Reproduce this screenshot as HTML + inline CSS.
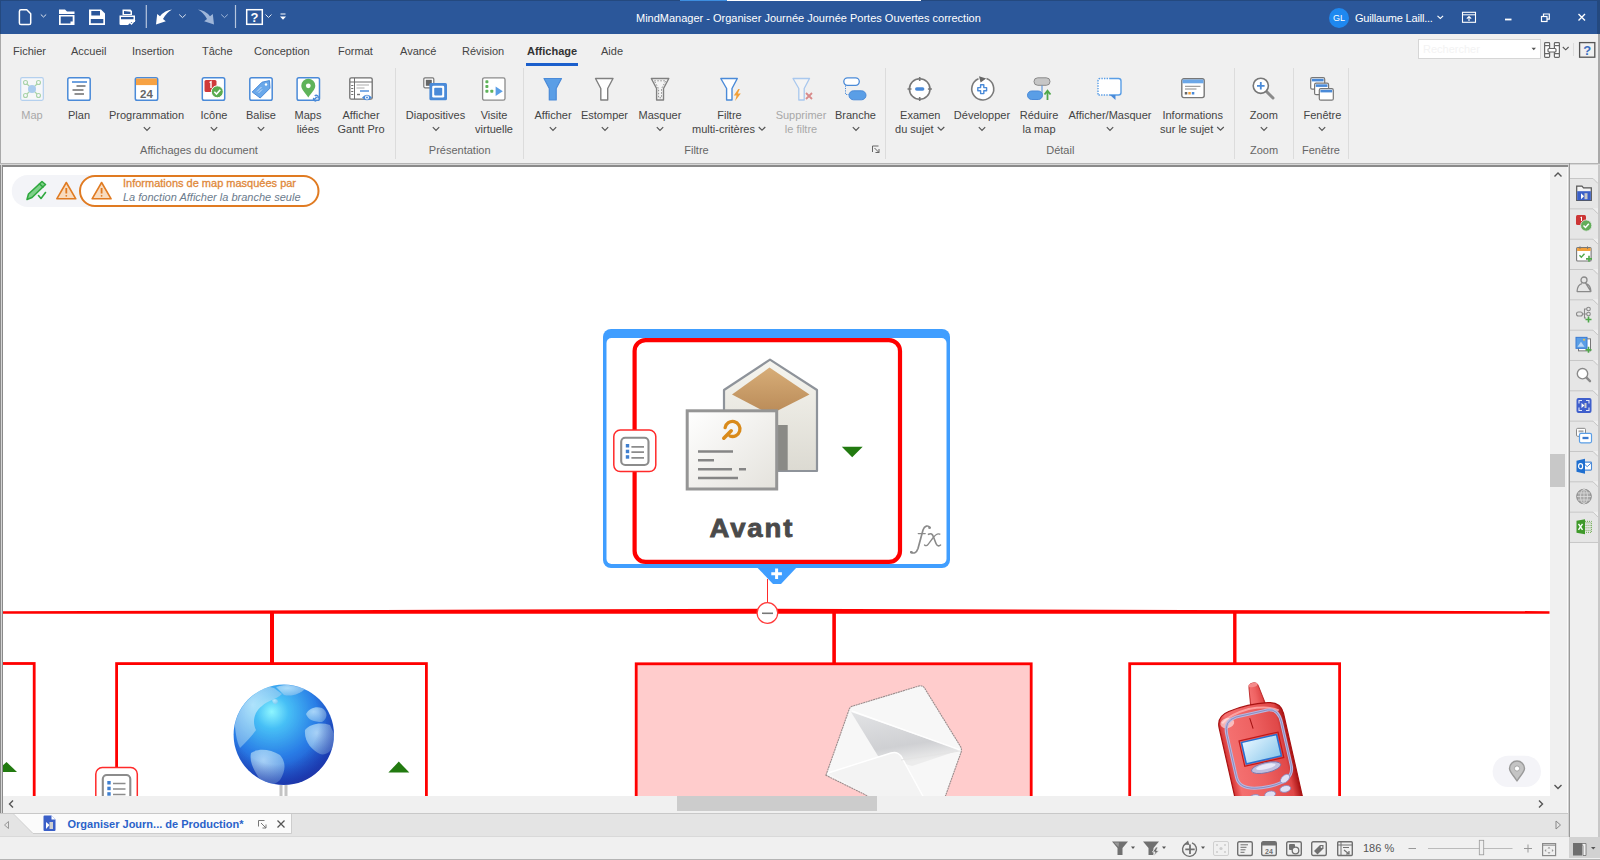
<!DOCTYPE html>
<html><head><meta charset="utf-8">
<style>
*{box-sizing:border-box;margin:0;padding:0}
html,body{width:1600px;height:860px;overflow:hidden;background:#f0f0f0;font-family:"Liberation Sans",sans-serif;font-size:11px;color:#444}
.a{position:absolute}
svg{position:absolute;overflow:visible}
.lb{position:absolute;line-height:13px;text-align:center;white-space:nowrap;color:#444;font-size:11px}
.gl{position:absolute;line-height:13px;text-align:center;white-space:nowrap;color:#666;font-size:11px;top:144px}
.tab{position:absolute;top:45px;line-height:13px;color:#444;white-space:nowrap}
.dis{color:#a8a8a8}
.sep{position:absolute;top:68px;width:1px;height:91px;background:#dcdcdc}
.chev{position:absolute}
</style></head><body>

<!-- TITLE BAR -->
<div class="a" style="left:0;top:0;width:1600px;height:34px;background:#2b579a"></div>
<div class="a" style="left:0;top:0;width:1600px;height:1px;background:#24497f"></div>
<div class="a" style="left:680px;top:0;width:47px;height:1px;background:#3d8ee0"></div>
<div class="a" style="left:727px;top:0;width:194px;height:1px;background:#ffffff"></div>
<div class="a" style="left:1597px;top:0;width:3px;height:34px;background:#24497f"></div>
<div class="a" style="left:636px;top:12px;line-height:13px;color:#fff;white-space:nowrap">MindManager - Organiser Journée Journée Portes Ouvertes correction</div>
<div id="qat"></div>
<div class="lb dis" style="left:-68px;width:200px;top:109px">Map</div>
<div class="lb" style="left:-21px;width:200px;top:109px">Plan</div>
<div class="lb" style="left:46.5px;width:200px;top:109px">Programmation</div>
<svg style="left:142.5px;top:126px" width="8" height="6"><path d="M0.8 1.2 L4 4.4 L7.2 1.2" fill="none" stroke="#555" stroke-width="1.2"/></svg>
<div class="lb" style="left:114px;width:200px;top:109px">Icône</div>
<svg style="left:210px;top:126px" width="8" height="6"><path d="M0.8 1.2 L4 4.4 L7.2 1.2" fill="none" stroke="#555" stroke-width="1.2"/></svg>
<div class="lb" style="left:161px;width:200px;top:109px">Balise</div>
<svg style="left:257px;top:126px" width="8" height="6"><path d="M0.8 1.2 L4 4.4 L7.2 1.2" fill="none" stroke="#555" stroke-width="1.2"/></svg>
<div class="lb" style="left:208px;width:200px;top:109px">Maps</div>
<div class="lb" style="left:208px;width:200px;top:123px">liées</div>
<div class="lb" style="left:261px;width:200px;top:109px">Afficher</div>
<div class="lb" style="left:261px;width:200px;top:123px">Gantt Pro</div>
<div class="lb" style="left:335.5px;width:200px;top:109px">Diapositives</div>
<svg style="left:431.5px;top:126px" width="8" height="6"><path d="M0.8 1.2 L4 4.4 L7.2 1.2" fill="none" stroke="#555" stroke-width="1.2"/></svg>
<div class="lb" style="left:394px;width:200px;top:109px">Visite</div>
<div class="lb" style="left:394px;width:200px;top:123px">virtuelle</div>
<div class="lb" style="left:453px;width:200px;top:109px">Afficher</div>
<svg style="left:549px;top:126px" width="8" height="6"><path d="M0.8 1.2 L4 4.4 L7.2 1.2" fill="none" stroke="#555" stroke-width="1.2"/></svg>
<div class="lb" style="left:504.5px;width:200px;top:109px">Estomper</div>
<svg style="left:600.5px;top:126px" width="8" height="6"><path d="M0.8 1.2 L4 4.4 L7.2 1.2" fill="none" stroke="#555" stroke-width="1.2"/></svg>
<div class="lb" style="left:560px;width:200px;top:109px">Masquer</div>
<svg style="left:656px;top:126px" width="8" height="6"><path d="M0.8 1.2 L4 4.4 L7.2 1.2" fill="none" stroke="#555" stroke-width="1.2"/></svg>
<div class="lb" style="left:629.5px;width:200px;top:109px">Filtre</div>
<div class="lb" style="left:629.5px;width:200px;top:123px">multi-critères<span style="display:inline-block;width:12px"></span></div>
<div class="lb dis" style="left:701px;width:200px;top:109px">Supprimer</div>
<div class="lb dis" style="left:701px;width:200px;top:123px">le filtre</div>
<div class="lb" style="left:755.5px;width:200px;top:109px">Branche</div>
<svg style="left:851.5px;top:126px" width="8" height="6"><path d="M0.8 1.2 L4 4.4 L7.2 1.2" fill="none" stroke="#555" stroke-width="1.2"/></svg>
<div class="lb" style="left:820.3px;width:200px;top:109px">Examen</div>
<div class="lb" style="left:820.3px;width:200px;top:123px">du sujet<span style="display:inline-block;width:12px"></span></div>
<div class="lb" style="left:882px;width:200px;top:109px">Développer</div>
<svg style="left:978px;top:126px" width="8" height="6"><path d="M0.8 1.2 L4 4.4 L7.2 1.2" fill="none" stroke="#555" stroke-width="1.2"/></svg>
<div class="lb" style="left:939px;width:200px;top:109px">Réduire</div>
<div class="lb" style="left:939px;width:200px;top:123px">la map</div>
<div class="lb" style="left:1010px;width:200px;top:109px">Afficher/Masquer</div>
<svg style="left:1106px;top:126px" width="8" height="6"><path d="M0.8 1.2 L4 4.4 L7.2 1.2" fill="none" stroke="#555" stroke-width="1.2"/></svg>
<div class="lb" style="left:1092.7px;width:200px;top:109px">Informations</div>
<div class="lb" style="left:1092.7px;width:200px;top:123px">sur le sujet<span style="display:inline-block;width:12px"></span></div>
<div class="lb" style="left:1163.8px;width:200px;top:109px">Zoom</div>
<svg style="left:1259.8px;top:126px" width="8" height="6"><path d="M0.8 1.2 L4 4.4 L7.2 1.2" fill="none" stroke="#555" stroke-width="1.2"/></svg>
<div class="lb" style="left:1222.4px;width:200px;top:109px">Fenêtre</div>
<svg style="left:1318.4px;top:126px" width="8" height="6"><path d="M0.8 1.2 L4 4.4 L7.2 1.2" fill="none" stroke="#555" stroke-width="1.2"/></svg>
<div class="gl" style="left:99px;width:200px">Affichages du document</div>
<div class="gl" style="left:359.7px;width:200px">Présentation</div>
<div class="gl" style="left:596.5px;width:200px">Filtre</div>
<div class="gl" style="left:960.3px;width:200px">Détail</div>
<div class="gl" style="left:1164px;width:200px">Zoom</div>
<div class="gl" style="left:1221px;width:200px">Fenêtre</div>
<div class="sep" style="left:395px"></div>
<div class="sep" style="left:523px"></div>
<div class="sep" style="left:885px"></div>
<div class="sep" style="left:1234px"></div>
<div class="sep" style="left:1293px"></div>
<div class="sep" style="left:1348px"></div>
<svg style="left:0;top:0" width="1600" height="170" viewBox="0 0 1600 170">
<!-- inline chevrons -->
<g fill="none" stroke="#555" stroke-width="1.2"><path d="M758.7 127 L762 130.2 L765.3 127"/><path d="M937.7 127 L941 130.2 L944.3 127"/><path d="M1217.2 127 L1220.5 130.2 L1223.8 127"/></g>

<!-- Map (disabled) 20-44 -->
<g transform="translate(20,77)">
<rect x="0.7" y="0.7" width="22.6" height="22.6" rx="1.5" fill="#f6f7f9" stroke="#b4d0ee" stroke-width="1.2"/>
<g stroke="#a9d3a9" stroke-width="1.1" fill="none"><path d="M6 6 L12 12 L18 6 M6 18 L12 12 L18 18"/>
<circle cx="5.5" cy="5.5" r="2" fill="#f6f7f9"/><circle cx="18.5" cy="5.5" r="2" fill="#f6f7f9"/><circle cx="5.5" cy="18.5" r="2" fill="#f6f7f9"/><circle cx="18.5" cy="18.5" r="2" fill="#f6f7f9"/></g>
<circle cx="12" cy="12" r="4" fill="#a9cbee"/>
</g>
<!-- Plan 67-91 -->
<g transform="translate(67,77)">
<rect x="0.8" y="0.8" width="22.4" height="22.4" rx="1.8" fill="#fff" stroke="#4a8ad8" stroke-width="1.5"/>
<path d="M5 5 H20" stroke="#4a8ad8" stroke-width="1.6"/>
<path d="M9.5 9H18.5 M5.5 13H16.5 M7.5 17H17" stroke="#6e6e6e" stroke-width="1.6"/>
</g>
<!-- Programmation 134-159 -->
<g transform="translate(134.5,77)">
<rect x="0.8" y="0.8" width="22.4" height="22.4" rx="1.8" fill="#fff" stroke="#4a8ad8" stroke-width="1.5"/>
<rect x="1.5" y="1.5" width="21" height="6.6" fill="#f7a243"/>
<text x="12" y="21" text-anchor="middle" font-family="Liberation Sans" font-weight="bold" font-size="11.5" fill="#666">24</text>
</g>
<!-- Icone 201.5-225.7 -->
<g transform="translate(201.5,77)">
<rect x="0.8" y="0.8" width="22.4" height="22.4" rx="1.8" fill="#fff" stroke="#4a8ad8" stroke-width="1.5"/>
<rect x="3" y="3" width="12" height="12" rx="1.5" fill="#cf3a3a"/>
<path d="M8 5.5 L9.5 4.7 V11" stroke="#fff" stroke-width="1.4" fill="none"/>
<circle cx="15.8" cy="14.8" r="6" fill="#5aab4f" stroke="#fff" stroke-width="1"/>
<path d="M12.8 14.8 L15 17 L18.8 12.8" stroke="#fff" stroke-width="1.6" fill="none"/>
</g>
<!-- Balise 249-273 -->
<g transform="translate(249,77)">
<rect x="0.8" y="0.8" width="22.4" height="22.4" rx="1.8" fill="#fff" stroke="#4a8ad8" stroke-width="1.5"/>
<path d="M3.2 15 L13 5.2 L20.5 3.6 L21 11.2 L11.2 21 Z" fill="#6aa8ea" stroke="#4a8ad8" stroke-width="1" stroke-linejoin="round"/>
<circle cx="17" cy="7.5" r="1.2" fill="#fff"/>
<path d="M8 14.5 L12.5 10 M9.5 16 L13 12.5" stroke="#cfe2f7" stroke-width="0.9"/>
</g>
<!-- Maps liees 296-320.6 -->
<g transform="translate(296.3,77)">
<rect x="0.8" y="0.8" width="22.4" height="22.4" rx="1.8" fill="#fff" stroke="#4a8ad8" stroke-width="1.5"/>
<path d="M12 20.5 C9 16 5 12.5 5 8.8 A7 7 0 0 1 19 8.8 C19 12.5 15 16 12 20.5 Z" fill="#5fb35a"/>
<circle cx="12" cy="8.8" r="2.4" fill="#fff"/>
<path d="M18 22.5 L20.5 20 M20 23.5 A1.8 1.8 0 0 1 17.5 21 M18.5 19 A1.8 1.8 0 0 1 21.5 21.5" stroke="#4a8ad8" stroke-width="1.5" fill="none"/>
</g>
<!-- Gantt Pro 349-373 -->
<g transform="translate(349,77)">
<rect x="0.8" y="0.8" width="22.4" height="21.4" rx="1.5" fill="#fff" stroke="#6e6e6e" stroke-width="1.3"/>
<path d="M1 5H23 M5.5 1V22" stroke="#6e6e6e" stroke-width="1"/>
<path d="M2.2 8.5H4.3 M2.2 11.5H4.3 M2.2 14.5H4.3 M2.2 17.5H4.3" stroke="#6e6e6e" stroke-width="1"/>
<path d="M7.5 8H20 M7.5 11H15.5" stroke="#c8c8c8" stroke-width="1.4"/>
<path d="M11 14H20" stroke="#4a8ad8" stroke-width="1.4"/>
<path d="M8 17.5H11" stroke="#777" stroke-width="1.4"/>
<path d="M13 20.5 Q18 15 23 20.5 Q18 26 13 20.5 Z" fill="#4a8ad8"/>
<circle cx="18" cy="20.5" r="2" fill="#fff"/><circle cx="18" cy="20.5" r="1" fill="#4a8ad8"/>
</g>
<!-- Diapositives 423-447 -->
<g transform="translate(423,77)">
<rect x="0.8" y="0.8" width="10" height="10" rx="1.2" fill="#fff" stroke="#777" stroke-width="1.2"/>
<rect x="2.8" y="2.8" width="6" height="6" fill="#666"/>
<rect x="6.4" y="6" width="17.6" height="17.3" rx="1.5" fill="#4a8ad8"/>
<rect x="9.2" y="8.8" width="12" height="11.7" rx="1.3" fill="#fff"/>
<rect x="11.2" y="10.8" width="8" height="7.7" rx="1" fill="#4a8ad8"/>
</g>
<!-- Visite virtuelle 482-506 -->
<g transform="translate(481.8,77)">
<rect x="0.8" y="0.8" width="22.4" height="22.4" rx="1.8" fill="#fff" stroke="#8a8a8a" stroke-width="1.3"/>
<g fill="#5fb35a"><rect x="3.6" y="3.3" width="3" height="3" rx="0.8"/><rect x="3.6" y="8" width="3" height="3" rx="0.8"/><rect x="3.6" y="12.8" width="3" height="3" rx="0.8"/><rect x="8.5" y="12.8" width="3" height="3" rx="0.8"/></g>
<path d="M13.8 9.5 L21 14.3 L13.8 19 Z" fill="#5a9ee6"/>
</g>
<!-- Afficher funnel 542.6-563 -->
<g transform="translate(542.5,77)">
<path d="M1.5 1.5 H19 L13.7 11.5 V23 H6.8 V11.5 Z" fill="#5a9ee6" stroke="#4a8ad8" stroke-width="1.2" stroke-linejoin="round"/>
</g>
<!-- Estomper 594-615 -->
<g transform="translate(594,77)">
<path d="M1.5 1.5 H19 L13.7 11.5 V23 H6.8 V11.5 Z" fill="#fff" stroke="#808080" stroke-width="1.4" stroke-linejoin="round"/>
</g>
<!-- Masquer 650-670 -->
<g transform="translate(649.8,77)">
<path d="M1.5 1.5 H19 L13.7 11.5 V23 H6.8 V11.5 Z" fill="#f4f4f4" stroke="#808080" stroke-width="1.4" stroke-linejoin="round"/>
<path d="M4.5 3.8 H16 L11.7 11.8 V20.8 H8.8 V11.8 Z" fill="none" stroke="#808080" stroke-width="0.9" stroke-dasharray="1.5 1.5"/>
</g>
<!-- Filtre multi 719-741 -->
<g transform="translate(719.3,77)">
<path d="M1.5 1.5 H18 L12.7 11.5 V23 H7.3 V11.5 Z" fill="#fff" stroke="#4a8ad8" stroke-width="1.4" stroke-linejoin="round"/>
<path d="M19 12 L14.5 18.5 H17.3 L15.8 24 L21.5 16.5 H18.5 L20.5 12 Z" fill="#f2a03a"/>
</g>
<!-- Supprimer (disabled) 791.5-813 -->
<g transform="translate(791.5,77)">
<path d="M1.5 1.5 H18 L12.7 11.5 V23 H7.3 V11.5 Z" fill="#f4f4f4" stroke="#a9c8ee" stroke-width="1.3" stroke-linejoin="round"/>
<path d="M14.5 16 L20.5 22 M20.5 16 L14.5 22" stroke="#d88a8a" stroke-width="1.8"/>
</g>
<!-- Branche 843-867 -->
<g transform="translate(843,77)">
<rect x="0.8" y="0.8" width="15.5" height="7.5" rx="3.75" fill="#fff" stroke="#4a8ad8" stroke-width="1.3"/>
<path d="M2.5 8.5 V17.5 H6" stroke="#4a8ad8" stroke-width="1" stroke-dasharray="1.2 1.2" fill="none"/>
<rect x="6" y="13.8" width="17" height="9" rx="4.5" fill="#5a9ee6" stroke="#4a8ad8" stroke-width="1"/>
</g>
<!-- launcher -->
<g transform="translate(872,145.5)" fill="none" stroke="#666" stroke-width="1"><path d="M0.5 6.5 V0.5 H6.5"/><path d="M2.5 2.5 L7 7 M7 3.5 V7 H3.5"/></g>
<!-- Examen 906-933.5 -->
<g transform="translate(906,77)">
<circle cx="13.7" cy="12" r="10.3" fill="#fff" stroke="#777" stroke-width="1.6"/>
<path d="M13.7 0 V4 M13.7 20 V24 M1.5 12 H5.5 M21.9 12 H25.9" stroke="#777" stroke-width="1.6"/>
<rect x="9" y="10.3" width="9.4" height="3.5" rx="1.75" fill="#4a8ad8"/>
</g>
<!-- Developper 970-995 -->
<g transform="translate(970,77)">
<path d="M8.5 1.8 A11 11 0 1 0 16.5 1.6" fill="#fff" stroke="#7a7a7a" stroke-width="1.6"/>
<path d="M9 -0.8 L16.2 1.6 L10.6 5.6 Z" fill="#666"/>
<path d="M10.6 7.8 H13.8 V10.6 H16.6 V13.8 H13.8 V16.6 H10.6 V13.8 H7.8 V10.6 H10.6 Z" fill="#fff" stroke="#4a8ad8" stroke-width="1.4" stroke-linejoin="round"/>
</g>
<!-- Reduire 1027-1051 -->
<g transform="translate(1027,77)">
<rect x="7" y="0.8" width="16" height="7.5" rx="3.75" fill="#c6c6c6" stroke="#8a8a8a" stroke-width="1"/>
<path d="M15 8.5 V17" stroke="#4a8ad8" stroke-width="1"/>
<rect x="0.5" y="14" width="15" height="8.5" rx="4.25" fill="#5a9ee6" stroke="#4a8ad8" stroke-width="1"/>
<path d="M20.5 23 V15 M17.5 17.5 L20.5 13.8 L23.5 17.5" stroke="#4fa84a" stroke-width="1.8" fill="none"/>
</g>
<!-- Afficher/Masquer 1097-1122 -->
<g transform="translate(1097,77)">
<path d="M3.5 1.5 H21.5 A2.5 2.5 0 0 1 24 4 V15.5 A2.5 2.5 0 0 1 21.5 18 H18.5 L18 22.5 L13.5 18 H3.5 A2.5 2.5 0 0 1 1 15.5 V4 A2.5 2.5 0 0 1 3.5 1.5 Z" fill="#fff"/>
<path d="M13 1.5 H21.5 A2.5 2.5 0 0 1 24 4 V15.5 A2.5 2.5 0 0 1 21.5 18 H12" fill="none" stroke="#5a9ee6" stroke-width="1.4"/>
<path d="M1 17.5 V3.5 Q1 1.5 3 1.5 H13" fill="none" stroke="#5a9ee6" stroke-width="1.4" stroke-dasharray="1.4 1.2"/>
<path d="M1.5 18 H12" fill="none" stroke="#5a9ee6" stroke-width="1.4" stroke-dasharray="1.4 1.2"/>
<path d="M13 18 L18.5 23 L18.5 18 Z" fill="#4a8ad8"/>
</g>
<!-- Informations 1181-1205 -->
<g transform="translate(1181,78)">
<rect x="0.8" y="0.8" width="22.4" height="18.8" rx="2" fill="#fff" stroke="#777" stroke-width="1.4"/>
<path d="M1.5 1.5 H22.5 V5.3 H1.5 Z" fill="#6ba7e8"/>
<path d="M4 8.3 H19.5 M4 11 H15.5" stroke="#888" stroke-width="1"/>
<rect x="3.8" y="14" width="2.5" height="2.5" fill="#666"/><rect x="7.3" y="14" width="2.5" height="2.5" fill="#f2a03a"/><rect x="10.8" y="14" width="2.5" height="2.5" fill="#4a8ad8"/>
</g>
<!-- Zoom 1252-1274 -->
<g transform="translate(1252,77)">
<path d="M13.5 13.5 L21 21" stroke="#8a8a8a" stroke-width="3" stroke-linecap="round"/>
<circle cx="8.8" cy="8.8" r="7.6" fill="#fff" stroke="#777" stroke-width="1.6"/>
<path d="M8.8 5 V12.6 M5 8.8 H12.6" stroke="#4a8ad8" stroke-width="1.8"/>
</g>
<!-- Fenetre 1310-1334 -->
<g transform="translate(1310,77)">
<rect x="0.7" y="0.7" width="14" height="11.5" rx="1.5" fill="#fff" stroke="#777" stroke-width="1.2"/><rect x="1.8" y="1.8" width="11.8" height="2.6" fill="#4a8ad8"/>
<rect x="4.6" y="6.2" width="14" height="11.5" rx="1.5" fill="#fff" stroke="#777" stroke-width="1.2"/><rect x="5.7" y="7.3" width="11.8" height="2.6" fill="#4a8ad8"/>
<rect x="9.3" y="11.7" width="14" height="11.5" rx="1.5" fill="#fff" stroke="#777" stroke-width="1.2"/><rect x="10.4" y="12.8" width="11.8" height="2.6" fill="#4a8ad8"/>
</g>

<!-- search box dropdown, binoculars, help -->
<g transform="translate(1544,42)" fill="#fff" stroke="#666" stroke-width="1.2">
<rect x="0.6" y="0.6" width="5" height="3" rx="0.8"/><rect x="10.4" y="0.6" width="5" height="3" rx="0.8"/>
<rect x="0.6" y="3.6" width="5" height="8" /><rect x="10.4" y="3.6" width="5" height="8"/>
<rect x="0.6" y="11.6" width="5" height="3.8" rx="0.8"/><rect x="10.4" y="11.6" width="5" height="3.8" rx="0.8"/>
<rect x="4" y="6.5" width="8" height="3.5" rx="1"/>
</g>
<path d="M1562.8 47 L1565.7 49.8 L1568.6 47" fill="none" stroke="#555" stroke-width="1.1"/>
<path d="M1573.5 43 V56" stroke="#dcdcdc" stroke-width="1"/>
<rect x="1579.6" y="42.6" width="15.2" height="14.6" fill="none" stroke="#555" stroke-width="1.3"/>
<text x="1587.2" y="55" text-anchor="middle" font-family="Liberation Sans" font-weight="bold" font-size="13" fill="#3a6fc0">?</text>

<!-- QAT (title bar) -->
<g fill="none" stroke="#fff" stroke-width="1.5" stroke-linejoin="round">
<path d="M21 9.8 H26.8 L30.7 13.7 V23 Q30.7 24.6 29.1 24.6 H21 Q19.4 24.6 19.4 23 V11.4 Q19.4 9.8 21 9.8 Z"/>
</g>
<path d="M40.8 14.5 L43.5 17 L46.2 14.5" fill="none" stroke="#dfe6f0" stroke-width="1"/>
<g fill="#fff">
<path d="M59 9.5 H65 L67 11.5 H74.5 V14 H59 Z"/>
<path d="M59 15 H74.5 V25 H59 Z M60.7 16.6 V23.4 H70.5 V21.5 H72.7 V16.6 Z" fill-rule="evenodd"/>
</g>
<g fill="#fff">
<path d="M89 9.5 H101 L105 13.5 V25 H89 Z M91.3 11 V15.5 H100 V11 Z M90.8 19 V23.3 H103.3 V19 Z" fill-rule="evenodd"/>
</g>
<g fill="#fff">
<path d="M122.5 9.5 H130.5 L132 11 V15 H122.5 Z M124 11 V14 H130.5 V11.8 Z" fill-rule="evenodd"/>
<path d="M119.5 15.5 H135 V22 H131 L128 25 H120.5 A1.2 1.2 0 0 1 119.5 24 Z M121 17 V19.2 H133.5 V17 Z" fill-rule="evenodd"/>
</g>
<path d="M129.5 22 L131.5 24 L135 20" fill="none" stroke="#fff" stroke-width="1.3"/>
<path d="M146.3 5 V28" stroke="#b7c6de" stroke-width="1.2"/>
<path d="M156 24.5 L157.2 14 L160 16.2 Q165 10.2 172 9.5 Q166.5 12.5 163 19 L165.8 21.2 Z" fill="#fff"/>
<path d="M179.2 14.5 L182.5 17.6 L185.8 14.5" fill="none" stroke="#dfe6f0" stroke-width="1"/>
<path d="M214 24.5 L212.8 14 L210 16.2 Q205 10.2 198 9.5 Q203.5 12.5 207 19 L204.2 21.2 Z" fill="#9fb6d9"/>
<path d="M221.2 14.5 L224.5 17.6 L227.8 14.5" fill="none" stroke="#9fb6d9" stroke-width="1"/>
<path d="M235.5 5 V28" stroke="#b7c6de" stroke-width="1.2"/>
<rect x="246.7" y="9.7" width="15.6" height="14.6" fill="none" stroke="#fff" stroke-width="1.5"/>
<text x="254.5" y="22" text-anchor="middle" font-family="Liberation Sans" font-weight="bold" font-size="13" fill="#fff">?</text>
<path d="M265.5 14.5 L268.5 17.5 L271.5 14.5" fill="none" stroke="#dfe6f0" stroke-width="1"/>
<path d="M280.5 14 H285.5" stroke="#fff" stroke-width="1"/><path d="M280 16.5 H286 L283 19.8 Z" fill="#fff"/>

<!-- title right -->
<circle cx="1339" cy="18" r="10" fill="#1e88f0"/>
<text x="1339" y="21.3" text-anchor="middle" font-family="Liberation Sans" font-size="9" fill="#fff">GL</text>
<path d="M1437.5 15.8 L1440.3 18.5 L1443.1 15.8" fill="none" stroke="#fff" stroke-width="1.1"/>
<rect x="1462.5" y="12.3" width="13" height="10" fill="none" stroke="#fff" stroke-width="1.1"/>
<path d="M1462.5 14.8 H1475.5" stroke="#fff" stroke-width="1"/>
<path d="M1469 21 V16.5 M1466.8 18.7 L1469 16.5 L1471.2 18.7" fill="none" stroke="#fff" stroke-width="1.1"/>
<path d="M1505 19.5 H1511.5" stroke="#fff" stroke-width="1.8"/>
<rect x="1541.5" y="16.5" width="5.5" height="5" fill="none" stroke="#fff" stroke-width="1.2"/>
<path d="M1543.5 16.5 V14 H1549.3 V19.2 H1547" fill="none" stroke="#fff" stroke-width="1.2"/>
<path d="M1578.5 14 L1585 20.5 M1585 14 L1578.5 20.5" stroke="#fff" stroke-width="1.4"/>
</svg>


<!-- RIBBON -->
<div class="a" style="left:0;top:34px;width:1px;height:131px;background:#a9a9a9"></div>
<div class="a" style="left:0;top:0;width:1px;height:34px;background:#24497f"></div>
<div class="a" style="left:1598px;top:34px;width:2px;height:130px;background:#a9a9a9"></div>
<div class="tab" style="left:13px">Fichier</div>
<div class="tab" style="left:71px">Accueil</div>
<div class="tab" style="left:132px">Insertion</div>
<div class="tab" style="left:202px">Tâche</div>
<div class="tab" style="left:254px">Conception</div>
<div class="tab" style="left:338px">Format</div>
<div class="tab" style="left:400px">Avancé</div>
<div class="tab" style="left:462px">Révision</div>
<div class="tab" style="left:527px;font-weight:bold;color:#333">Affichage</div>
<div class="tab" style="left:601px">Aide</div>
<div class="a" style="left:526px;top:63px;width:52px;height:3px;background:#1b5fcc"></div>

<!-- search -->
<div class="a" style="left:1418px;top:39px;width:123px;height:20px;background:#fff;border:1px solid #d6d6d6"></div>
<div class="a" style="left:1423px;top:43px;line-height:13px;color:#f3f3f3;font-size:11px">Rechercher</div>
<svg style="left:1531px;top:47px" width="6" height="4"><path d="M0.5 0.8 H5 L2.75 3.3 Z" fill="#555"/></svg>

<!-- ribbon bottom -->
<div class="a" style="left:0;top:163px;width:1600px;height:1px;background:#b4b4b4"></div>
<div class="a" style="left:0;top:164px;width:1600px;height:1px;background:#d6d6d6"></div>

<!-- CANVAS FRAME -->
<div class="a" style="left:0;top:165px;width:1570px;height:648px;background:#8a8a8a"></div>
<div class="a" style="left:1px;top:165px;width:1px;height:648px;background:#d4d4d4"></div>
<div class="a" style="left:3px;top:167px;width:1547px;height:629px;background:#fff;overflow:hidden" id="canvas">
<svg style="left:-3px;top:-167px" width="1600" height="860" viewBox="0 0 1600 860">
<defs>
<linearGradient id="envBody" x1="0" y1="0" x2="0" y2="1"><stop offset="0" stop-color="#f6f5ef"/><stop offset="1" stop-color="#dcdad2"/></linearGradient>
<linearGradient id="envFlap" x1="0" y1="0" x2="0" y2="1"><stop offset="0" stop-color="#d7ad78"/><stop offset="1" stop-color="#b98a57"/></linearGradient>
<linearGradient id="card" x1="0" y1="0" x2="1" y2="1"><stop offset="0" stop-color="#ffffff"/><stop offset="1" stop-color="#e4e2dc"/></linearGradient>
<radialGradient id="globe" cx="0.4" cy="0.3" r="0.8" fx="0.38" fy="0.27"><stop offset="0" stop-color="#8ef6ff"/><stop offset="0.2" stop-color="#48c0f6"/><stop offset="0.55" stop-color="#2a7de6"/><stop offset="0.85" stop-color="#1e4bc4"/><stop offset="1" stop-color="#2a2e9a"/></radialGradient>
<radialGradient id="cont" cx="0.38" cy="0.3" r="0.8" gradientUnits="objectBoundingBox"><stop offset="0" stop-color="#d8f4ff" stop-opacity="0.85"/><stop offset="1" stop-color="#8cc0ec" stop-opacity="0.7"/></radialGradient>
<radialGradient id="gedge" cx="0.42" cy="0.36" r="0.62"><stop offset="0.7" stop-color="#1a2a9a" stop-opacity="0"/><stop offset="1" stop-color="#1a2a9a" stop-opacity="0.45"/></radialGradient>
<linearGradient id="env2g1" x1="0" y1="0" x2="0.3" y2="1"><stop offset="0" stop-color="#e2e3e5"/><stop offset="0.7" stop-color="#cfd0d3"/><stop offset="1" stop-color="#ececec"/></linearGradient>
<linearGradient id="env2" x1="0" y1="0" x2="1" y2="1"><stop offset="0" stop-color="#ffffff"/><stop offset="1" stop-color="#dcdcdc"/></linearGradient>
<linearGradient id="phone" x1="0" y1="0" x2="1" y2="0"><stop offset="0" stop-color="#d43030"/><stop offset="0.12" stop-color="#f47070"/><stop offset="0.5" stop-color="#ee6262"/><stop offset="0.88" stop-color="#e04848"/><stop offset="1" stop-color="#a81212"/></linearGradient>
<linearGradient id="screen" x1="0" y1="0" x2="1" y2="1"><stop offset="0" stop-color="#e6f6ff"/><stop offset="1" stop-color="#8cc8ec"/></linearGradient>
</defs>

<!-- info pill -->
<rect x="11.75" y="175" width="120" height="32" rx="16" fill="#f3f4f8"/>
<rect x="80" y="176" width="238.5" height="30" rx="15" fill="#fff" stroke="#e07b22" stroke-width="2"/>
<g id="pencil" fill="none" stroke="#2fa83f" stroke-width="1.6" stroke-linejoin="round" stroke-linecap="round">
<path d="M27 199.5 L28.5 194 L42 181.5 L45.5 184.5 L32 197.5 Z" fill="#7fd08a"/>
<path d="M39.5 184 L43 187"/>
<path d="M38.5 195.5 L41 198.5 L45.5 192.5"/>
</g>
<g fill="#f8dcc0" stroke="#e07b22" stroke-width="1.6" stroke-linejoin="round">
<path d="M66.3 182.5 L75.8 198.8 L56.8 198.8 Z"/>
<path d="M101.6 182.5 L111.1 198.8 L92.1 198.8 Z"/>
</g>
<g stroke="#e07b22" stroke-width="1.8">
<path d="M66.3 188 L66.3 193.5 M101.6 188 L101.6 193.5"/>
</g>
<g fill="#e07b22"><circle cx="66.3" cy="195.8" r="0.9"/><circle cx="101.6" cy="195.8" r="0.9"/></g>
<text x="123" y="187.3" font-family="Liberation Sans" font-size="11" fill="#e0883a" stroke="#e0883a" stroke-width="0.3">Informations de map masquées par</text>
<text x="123" y="201" font-family="Liberation Sans" font-size="11" font-style="italic" fill="#6b7b8c">La fonction Afficher la branche seule</text>

<!-- central topic blue frame -->
<rect x="603" y="329" width="347" height="239" rx="8" fill="#409eff"/>
<rect x="606.5" y="338" width="340" height="226" rx="5" fill="#fff"/>
<!-- red box -->
<rect x="634.6" y="340.1" width="265.4" height="221.8" rx="11" fill="#fff" stroke="#ff0000" stroke-width="4.2"/>
<!-- note icon -->
<rect x="613.8" y="430.1" width="42" height="41.5" rx="6.5" fill="#fff" stroke="#ff2a2a" stroke-width="1.5"/>
<rect x="621.2" y="437.7" width="27.3" height="27.3" rx="4" fill="none" stroke="#8c8c8c" stroke-width="2.1"/>
<g fill="#3f7fcf"><rect x="625.8" y="444" width="3.4" height="3.5"/><rect x="625.8" y="449.7" width="3.4" height="3.5"/><rect x="625.8" y="455.2" width="3.4" height="3.5"/></g>
<g stroke="#8c8c8c" stroke-width="1.7"><path d="M631.4 446.9H644M631.4 452.2H644M631.4 457.8H644"/></g>

<!-- envelope icon -->
<path d="M724 390 L770 359.6 L817 390 L817 471 L724 471 Z" fill="url(#envBody)" stroke="#8e939a" stroke-width="2.2" stroke-linejoin="round"/>
<path d="M732 394.5 L769.5 367.5 L809.5 394.5 L770 414.5 Z" fill="url(#envFlap)"/>
<rect x="777" y="425" width="10.7" height="45.5" fill="#8a8a86"/>
<rect x="687.2" y="410.8" width="89.5" height="78.2" fill="url(#card)" stroke="#959595" stroke-width="3"/>
<g fill="none" stroke="#d98a1a" stroke-linecap="round">
<path d="M725.1 427.7 A7.5 7.5 0 1 1 729.9 436" stroke-width="3.3"/>
<path d="M723.8 438.2 L731.2 430.8" stroke-width="3.6"/>
</g>
<g stroke="#858585" stroke-width="2.4"><path d="M698 451.5H733M698 460.3H714M698 469.2H732M739 469.2H746M698 478H738"/></g>
<path d="M841.8 446.8 L862.7 446.8 L852.2 457.3 Z" fill="#227a10"/>
<text x="0" y="0" transform="translate(709.5,537) scale(1.1,1)" font-family="Liberation Sans" font-size="25" font-weight="bold" letter-spacing="1.7" fill="#4a4a4a" stroke="#4a4a4a" stroke-width="0.8">Avant</text>
<g fill="none" stroke="#8a8a8a" stroke-linecap="round">
<path d="M930 527.5 C928 525 924.5 525.5 923 530 L918 548.5 C916.5 553 913.5 554 911 552" stroke-width="1.7"/>
<path d="M918.3 533.6 H925.2" stroke-width="1.4"/>
<path d="M928.5 534.3 C931 533 932.5 534 933.5 537 L936 543.5 C937 546 939 546.5 940.5 545" stroke-width="1.6"/>
<path d="M939.8 534.2 C937.5 533 935.5 534.5 932.5 538.5 L928.5 543.8 C927 546 925.5 546 924.5 545" stroke-width="1.3"/>
</g>
<circle cx="929.5" cy="527.8" r="1.3" fill="#8a8a8a"/><circle cx="911.3" cy="552.3" r="1.3" fill="#8a8a8a"/>
<!-- blue tab -->
<path d="M756.7 567 L797 567 L781 584 L773 584 Z" fill="#409eff"/>
<path d="M776.6 568.5 V579 M771.3 573.8 H781.9" stroke="#fff" stroke-width="3"/>
<path d="M767.5 579 V602.5" stroke="#ff2a2a" stroke-width="1"/>

<!-- main horizontal tapered line -->
<path d="M3 611.2 L767 608.8 L1549.5 611.2 L1549.5 613.8 L3 613.8 Z" fill="#ff0000"/>
<!-- vertical connectors -->
<g fill="#ff0000">
<rect x="270" y="612" width="4" height="51"/>
<rect x="832.3" y="612" width="3.6" height="51"/>
<rect x="1233.1" y="612" width="3.4" height="51"/>
</g>
<!-- collapse circle -->
<circle cx="767.4" cy="613" r="10.3" fill="#fff" stroke="#ff3a3a" stroke-width="1.2"/>
<path d="M762 613.3 H773" stroke="#777" stroke-width="1.6"/>

<!-- subtopic boxes -->
<rect x="-100" y="663.5" width="134.2" height="200" fill="#fff" stroke="#ff0000" stroke-width="2.8"/>
<rect x="116.6" y="663.6" width="309.8" height="200" fill="#fff" stroke="#ff0000" stroke-width="2.8"/>
<rect x="636.2" y="663.8" width="395" height="200" fill="#ffcccc" stroke="#ff0000" stroke-width="2.8"/>
<rect x="1129.7" y="663.7" width="209.9" height="200" fill="#fff" stroke="#ff0000" stroke-width="2.8"/>

<!-- green up triangles -->
<path d="M-4 772 L6.5 762 L17 772 Z" fill="#227a10"/>
<path d="M388.4 772.6 L398.8 761.6 L409.3 772.6 Z" fill="#227a10"/>

<!-- globe -->
<g id="globeg">
<rect x="279.5" y="785" width="3" height="11" fill="#c4c4c4"/><rect x="284.5" y="785" width="3" height="11" fill="#c4c4c4"/>
<circle cx="283.8" cy="734.8" r="50.2" fill="url(#globe)"/>
<clipPath id="gclip"><circle cx="283.8" cy="734.8" r="50"/></clipPath>
<g clip-path="url(#gclip)">
<g fill="url(#cont)" opacity="0.85">
<path d="M238 694 C248 686 262 684 274 688 L282 694 C276 700 268 700 262 706 C254 712 252 722 256 730 C252 736 246 742 240 748 C234 736 233 712 238 694 Z"/>
<path d="M276 687 C286 684 298 684 306 688 C300 694 292 697 284 695 Z"/>
<path d="M251 753 C258 748 270 749 280 755 C286 762 286 770 280 780 C274 786 266 786 260 780 C254 770 249 762 251 753 Z"/>
<path d="M305 730 C310 724 320 722 330 725 L336 738 C334 750 327 756 320 754 C312 750 304 742 305 730 Z"/>
<path d="M306 714 C309 708 316 706 322 708 C328 712 328 718 322 722 C314 722 308 720 306 714 Z"/>
<path d="M272 700 C275 698 278 699 278 702 C276 705 273 705 272 700 Z"/>
</g>
<circle cx="283.8" cy="734.8" r="50" fill="url(#gedge)"/>
</g>
</g>

<!-- note icon globe box -->
<rect x="95.8" y="767.6" width="41.5" height="60" rx="6.5" fill="#fff" stroke="#ff2a2a" stroke-width="1.5"/>
<rect x="102.8" y="775" width="27.5" height="40" rx="4" fill="none" stroke="#8c8c8c" stroke-width="2.1"/>
<g fill="#3f7fcf"><rect x="107.3" y="781" width="3.4" height="3.5"/><rect x="107.3" y="786.7" width="3.4" height="3.5"/><rect x="107.3" y="792.2" width="3.4" height="3.5"/></g>
<g stroke="#8c8c8c" stroke-width="1.7"><path d="M113 783.5H125.5M113 789H125.5M113 794.5H125.5"/></g>

<!-- envelope 2 -->
<g id="env2g">
<path d="M825.9 775.3 L849.2 709.2 Q850 707 852 706.3 L919 686 Q922.5 685 924.5 688 L960.8 747 Q962 750 961 752.5 L944 800 L876 800 Z" fill="#f7f7f7" stroke="#9a8c8c" stroke-width="1.1" stroke-dasharray="2 0.6"/>
<path d="M851 712 L960 750 L912 766 L878 756 Z" fill="url(#env2g1)"/>
<path d="M852 711 L960 750" stroke="#ffffff" stroke-width="1.5" opacity="0.9"/>
<path d="M828 773 L891 753 Q897 751 901 756 L925 800 L876 800 Z" fill="#f3f3f3"/>
<path d="M828 773 L891 753 Q897 751 901 756 L925 800" fill="none" stroke="#ffffff" stroke-width="1.4"/>
<path d="M901 760 L960 751" stroke="#e4e4e4" stroke-width="1"/>
</g>

<!-- phone -->
<g id="phoneg" transform="translate(1258,750) rotate(-12.8)">
<path d="M2.5 -44 L5 -63 Q5.5 -66.5 9.5 -66.5 Q14 -66.5 14.5 -63 L17.5 -44 Z" fill="url(#phone)" stroke="#b82020" stroke-width="0.8"/>
<ellipse cx="9.6" cy="-64.5" rx="4.6" ry="2" fill="#f58a8a"/>
<path d="M-33 -30 Q-33 -42 -20 -44 Q0 -47.5 20 -44 Q33 -42 33 -30 L33 70 L-33 70 Z" fill="url(#phone)" stroke="#a81212" stroke-width="1.2"/>
<path d="M-29 -34 Q-20 -41 0 -42 Q20 -41 29 -34" fill="none" stroke="#ffb0b0" stroke-width="2" opacity="0.8"/>
<ellipse cx="-24" cy="-33" rx="7" ry="5" fill="#fff" opacity="0.55"/>
<path d="M-27 -22 Q-27 -36 -14 -37 L18 -37 Q29 -36 29 -22 L29 22 Q29 38 4 38 Q-27 38 -27 22 Z" fill="none" stroke="#b8b8e0" stroke-width="3"/>
<path d="M-27 -22 Q-27 -36 -14 -37 L18 -37 Q29 -36 29 -22 L29 22 Q29 38 4 38 Q-27 38 -27 22 Z" fill="none" stroke="#6060a0" stroke-width="0.8" opacity="0.6"/>
<path d="M-1 -33 L0 -22" stroke="#a01010" stroke-width="1"/>
<rect x="-14.5" y="-11" width="36" height="22" fill="url(#screen)" stroke="#2a6fd0" stroke-width="1.6"/>
<rect x="-16.5" y="-13" width="40" height="26" fill="none" stroke="#c01818" stroke-width="1.2"/>
<ellipse cx="4" cy="19" rx="15" ry="5" fill="#c0c0e0" stroke="#7070a8" stroke-width="0.8"/>
<ellipse cx="4" cy="18" rx="10" ry="2.5" fill="#e8e8f8"/>
<g fill="#e0e0f4" stroke="#8a8ac0" stroke-width="0.8">
<ellipse cx="-14" cy="46" rx="5.5" ry="3.3"/><ellipse cx="2" cy="46" rx="5.5" ry="3.3"/><ellipse cx="18" cy="44" rx="5.5" ry="3.3"/>
<ellipse cx="20" cy="34" rx="5.5" ry="3.3" transform="rotate(-30 20 34)"/>
</g>
</g>

<!-- pin button -->
<rect x="1492.6" y="755.7" width="48.4" height="31.3" rx="15.6" fill="#f4f4f8"/>
<path d="M1517 781 C1514 776 1509.5 772 1509.5 768.5 A7.5 7.5 0 0 1 1524.5 768.5 C1524.5 772 1520 776 1517 781 Z" fill="#c4c4c4" stroke="#9a9a9a" stroke-width="1.4" stroke-linejoin="round"/>
<circle cx="1517" cy="768.5" r="2.6" fill="#fff" stroke="#9a9a9a" stroke-width="0.8"/>
</svg>
</div>
<!-- vertical scrollbar -->
<div class="a" style="left:1550px;top:167px;width:17px;height:629px;background:#f0f0f0"></div>
<div class="a" style="left:1550px;top:454px;width:15px;height:33px;background:#c8c8c8"></div>
<div class="a" style="left:1567px;top:167px;width:1px;height:646px;background:#fafafa"></div>
<!-- horizontal scrollbar -->
<div class="a" style="left:3px;top:796px;width:1564px;height:17px;background:#f0f0f0"></div>
<div class="a" style="left:677px;top:796px;width:200px;height:15px;background:#cccccc"></div>
<div class="a" style="left:0;top:813px;width:1568px;height:1px;background:#c8c8c8"></div>

<!-- TAB BAR -->
<div class="a" style="left:0;top:814px;width:1568px;height:22px;background:#e4e4e4"></div>
<div class="a" style="left:0;top:836px;width:1600px;height:1px;background:#d9d9d9"></div>

<!-- STATUS BAR -->
<div class="a" style="left:0;top:837px;width:1600px;height:23px;background:#f0f0f0"></div>
<div class="a" style="left:0;top:859px;width:1600px;height:1px;background:#b4b4b4"></div>
<div class="a" style="left:1363px;top:842px;line-height:13px;color:#555;white-space:nowrap">186 %</div>
<!--STATUS-->

<!-- SIDEBAR -->
<div class="a" style="left:1568px;top:165px;width:1px;height:672px;background:#d0d0d0"></div>
<div class="a" style="left:1569px;top:163px;width:1px;height:674px;background:#9a9a9a"></div>
<div class="a" style="left:1570px;top:165px;width:28px;height:672px;background:#efefef"></div>

<svg style="left:0;top:0" width="1600" height="860" viewBox="0 0 1600 860">
<path d="M1570 178.00 H1593 L1598 183.00 V208.33 H1570 Z" fill="#e6e6e6"/>
<path d="M1570 178.50 H1593 L1598 183.50" fill="none" stroke="#c6c6c6" stroke-width="1"/>

<path d="M1570 208.33 H1593 L1598 213.33 V238.66 H1570 Z" fill="#e6e6e6"/>
<path d="M1570 208.83 H1593 L1598 213.83" fill="none" stroke="#c6c6c6" stroke-width="1"/>

<path d="M1570 238.66 H1593 L1598 243.66 V268.99 H1570 Z" fill="#e6e6e6"/>
<path d="M1570 239.16 H1593 L1598 244.16" fill="none" stroke="#c6c6c6" stroke-width="1"/>

<path d="M1570 268.99 H1593 L1598 273.99 V299.32 H1570 Z" fill="#e6e6e6"/>
<path d="M1570 269.49 H1593 L1598 274.49" fill="none" stroke="#c6c6c6" stroke-width="1"/>

<path d="M1570 299.32 H1593 L1598 304.32 V329.65 H1570 Z" fill="#e6e6e6"/>
<path d="M1570 299.82 H1593 L1598 304.82" fill="none" stroke="#c6c6c6" stroke-width="1"/>

<path d="M1570 329.65 H1593 L1598 334.65 V359.98 H1570 Z" fill="#e6e6e6"/>
<path d="M1570 330.15 H1593 L1598 335.15" fill="none" stroke="#c6c6c6" stroke-width="1"/>

<path d="M1570 359.98 H1593 L1598 364.98 V390.31 H1570 Z" fill="#e6e6e6"/>
<path d="M1570 360.48 H1593 L1598 365.48" fill="none" stroke="#c6c6c6" stroke-width="1"/>

<path d="M1570 390.31 H1593 L1598 395.31 V420.64 H1570 Z" fill="#e6e6e6"/>
<path d="M1570 390.81 H1593 L1598 395.81" fill="none" stroke="#c6c6c6" stroke-width="1"/>

<path d="M1570 420.64 H1593 L1598 425.64 V450.97 H1570 Z" fill="#e6e6e6"/>
<path d="M1570 421.14 H1593 L1598 426.14" fill="none" stroke="#c6c6c6" stroke-width="1"/>

<path d="M1570 450.97 H1593 L1598 455.97 V481.30 H1570 Z" fill="#e6e6e6"/>
<path d="M1570 451.47 H1593 L1598 456.47" fill="none" stroke="#c6c6c6" stroke-width="1"/>

<path d="M1570 481.30 H1593 L1598 486.30 V511.63 H1570 Z" fill="#e6e6e6"/>
<path d="M1570 481.80 H1593 L1598 486.80" fill="none" stroke="#c6c6c6" stroke-width="1"/>

<path d="M1570 511.63 H1593 L1598 516.63 V541.96 H1570 Z" fill="#e6e6e6"/>
<path d="M1570 512.13 H1593 L1598 517.13" fill="none" stroke="#c6c6c6" stroke-width="1"/>

<path d="M1570 542.46 H1598" stroke="#c6c6c6" stroke-width="1"/>
<rect x="1598" y="165" width="2" height="672" fill="#c8c8c8"/>
<g transform="translate(1576,185.20)"><path d="M0.7 1 H6 L7.5 2.6 H15.3 V15.3 H0.7 Z" fill="#f4f4f4" stroke="#555" stroke-width="1.2"/><rect x="1.2" y="6" width="13.6" height="9" fill="#3a5fc8"/><path d="M5 8 L8 11 L5 14 Z" fill="#fff"/><rect x="8.5" y="8" width="3" height="6" fill="#c8c8c8"/></g>
<g transform="translate(1575.5,215.03)"><rect x="0.5" y="0" width="10" height="10" rx="1.5" fill="#cc3535"/><path d="M5 2.5 L6 2 V6" stroke="#fff" stroke-width="1" fill="none"/><circle cx="10.7" cy="10.5" r="5.6" fill="#62ad5a" stroke="#e6e6e6" stroke-width="0.8"/><path d="M8 10.5 L10 12.5 L13.3 8.8" stroke="#fff" stroke-width="1.5" fill="none"/></g>
<g transform="translate(1576,245.86)"><rect x="0.6" y="1.6" width="14.5" height="13.5" rx="1" fill="#fff" stroke="#777" stroke-width="1.1"/><rect x="1.1" y="2.1" width="13.5" height="3" fill="#f2a03a"/><path d="M4 0.5 V3 M11.5 0.5 V3" stroke="#777" stroke-width="1"/><path d="M3.5 9.5 L5.3 11.3 L8.5 8" stroke="#4fa84a" stroke-width="1.4" fill="none"/><path d="M13 10 V16 M10 13 H16" stroke="#4fa84a" stroke-width="1.6"/></g>
<g transform="translate(1576,276.19)" fill="none" stroke="#8a8a8a" stroke-width="1.3"><circle cx="8" cy="3.8" r="3"/><path d="M1 15.5 Q1.5 8.5 6 7.5 M10 7.5 Q14.5 8.5 15 15.5 Z M1 15.5 H15"/></g>
<g transform="translate(1576,306.52)" fill="none" stroke="#8a8a8a" stroke-width="1.1"><rect x="0.5" y="5.5" width="6" height="4" rx="2"/><circle cx="12.5" cy="2.5" r="1.8"/><circle cx="12.5" cy="7.5" r="1.8"/><path d="M6.5 7.5 H10.7 M8.5 7.5 V2.5 H10.7 M8.5 7.5 V11.5 H10"/><path d="M12.5 10 V16 M9.5 13 H15.5" stroke="#4fa84a" stroke-width="1.6"/></g>
<g transform="translate(1575.5,336.85)"><rect x="3" y="2" width="12" height="12" fill="#fff" stroke="#777" stroke-width="1"/><rect x="0.5" y="0.5" width="11" height="11" fill="#5a9ee6" stroke="#3a7ad0" stroke-width="1"/><path d="M2 10 L5.5 5 L9 10 Z" fill="#fff" opacity="0.6"/><circle cx="8.5" cy="3" r="1" fill="#f2c040"/><path d="M13 10 V16 M10 13 H16" stroke="#4fa84a" stroke-width="1.6"/></g>
<g transform="translate(1576,367.18)"><path d="M9.5 9.5 L14 14" stroke="#8a8a8a" stroke-width="2.4" stroke-linecap="round"/><circle cx="6.5" cy="6.5" r="5.2" fill="#fff" stroke="#8a8a8a" stroke-width="1.4"/></g>
<g transform="translate(1576,397.51)"><rect x="0.5" y="0.5" width="15" height="15" rx="2" fill="#3f5fcc"/><path d="M3 6 V3 H6 M10 3 H13 V6 M13 10 V13 H10 M6 13 H3 V10" stroke="#fff" stroke-width="1.1" fill="none" opacity="0.85"/><path d="M5.5 5.5 L8.5 8 L5.5 10.5 Z" fill="#fff"/><rect x="8.5" y="5.5" width="2" height="5" fill="#ccc"/></g>
<g transform="translate(1576,427.84)"><rect x="0.5" y="0.5" width="9" height="8" rx="1.2" fill="#fff" stroke="#888" stroke-width="1"/><rect x="2.5" y="2.5" width="5" height="2" fill="#aaa"/><rect x="3.5" y="5.5" width="12" height="9.5" rx="1.5" fill="#fff" stroke="#5a9ee6" stroke-width="1.2"/><rect x="6.5" y="9" width="6" height="2.3" fill="#3a7ad0"/></g>
<g transform="translate(1576,458.17)"><rect x="7" y="4" width="8.5" height="8" rx="0.8" fill="#fff" stroke="#4a8ad8" stroke-width="1.1"/><path d="M7.5 5 L11.2 8.5 L15 5" stroke="#4a8ad8" stroke-width="1" fill="none"/><path d="M0.5 2.5 L9 0.5 V15.5 L0.5 13.5 Z" fill="#1f6fd0"/><ellipse cx="4.6" cy="8" rx="2" ry="2.6" fill="none" stroke="#fff" stroke-width="1.2"/></g>
<g transform="translate(1576,488.50)" fill="none" stroke="#8a8a8a" stroke-width="1"><circle cx="8" cy="8" r="7.3" fill="#a8a8a8" stroke="#888"/><path d="M1 8 H15 M8 0.7 V15.3 M2 4.5 H14 M2 11.5 H14" stroke="#ddd" stroke-width="0.8"/><ellipse cx="8" cy="8" rx="3.5" ry="7.3" stroke="#ddd" stroke-width="0.8"/></g>
<g transform="translate(1576,518.83)"><path d="M9 2.5 H15.5 V13.5 H9" fill="none" stroke="#6aaa4a" stroke-width="1" stroke-dasharray="1 1"/><path d="M9.5 4 H15 M9.5 6.5 H15 M9.5 9 H15 M9.5 11.5 H15" stroke="#6aaa4a" stroke-width="0.8" stroke-dasharray="1.2 0.8"/><path d="M0.5 2 L9 0.5 V15.5 L0.5 14 Z" fill="#3f9a2a"/><path d="M2.5 5 L6.5 11 M6.5 5 L2.5 11" stroke="#fff" stroke-width="1.4"/></g>
<path d="M1554.5 176.5 L1558 173 L1561.5 176.5" fill="none" stroke="#555" stroke-width="1.4"/>
<path d="M1554.5 785 L1558 788.5 L1561.5 785" fill="none" stroke="#555" stroke-width="1.4"/>
<path d="M13 800.5 L9.5 804 L13 807.5" fill="none" stroke="#555" stroke-width="1.4"/>
<path d="M1539 800.5 L1542.5 804 L1539 807.5" fill="none" stroke="#555" stroke-width="1.4"/>
<path d="M8.5 821.5 L4.5 825 L8.5 828.5 Z" fill="none" stroke="#999" stroke-width="1"/>
<path d="M1556 821 L1560.5 825 L1556 829 Z" fill="none" stroke="#888" stroke-width="1"/>
<path d="M13 814 L291 814 L291 833.5 L33 833.5 Z" fill="#fbfbfb"/>
<path d="M13.5 814 L33 833.5 H291.5 V814" fill="none" stroke="#cdcdcd" stroke-width="1"/>
<g transform="translate(43,815)"><path d="M0.5 1.5 A1 1 0 0 1 1.5 0.5 H8.5 L12.5 4.5 V15 A1 1 0 0 1 11.5 16 H1.5 A1 1 0 0 1 0.5 15 Z" fill="#3a5fc8"/><path d="M8.5 0.5 V4.5 H12.5 Z" fill="#fff"/><path d="M3 7 L6.5 10 L3 14 Z" fill="#fff"/><rect x="6.5" y="7" width="3.5" height="7" fill="#cfcfcf"/></g>
<text x="67.5" y="828" font-family="Liberation Sans" font-size="11" font-weight="bold" fill="#2a62c9">Organiser Journ... de Production*</text>
<g fill="none" stroke="#777" stroke-width="1"><path d="M258.5 826.5 V820.5 H264.5"/><path d="M261 823 L266 828 M266 824.5 V828 H262.5"/></g>
<path d="M277.5 820.5 L284.5 827.5 M284.5 820.5 L277.5 827.5" stroke="#555" stroke-width="1.3"/>
<rect x="1569" y="837" width="31" height="21" fill="#d2d2d2"/>
<path d="M1112 841.5 H1128 L1122.5 848 V855 H1117.5 V848 Z" fill="#707070"/><path d="M1114 842.5 H1119 L1118.5 847 Z" fill="#999"/>
<path d="M1131 846.5 H1135 L1133 849 Z" fill="#555"/>
<path d="M1143 841.5 H1159 L1153.5 848 V855 H1148.5 V848 Z" fill="#707070"/><path d="M1156 847 L1152.5 852 H1155 L1153.5 856 L1159 850.5 H1156.5 L1158 847 Z" fill="#707070" stroke="#f0f0f0" stroke-width="0.8"/>
<path d="M1162 846.5 H1166 L1164 849 Z" fill="#555"/>
<g fill="none" stroke="#707070" stroke-width="1.4"><path d="M1186 843.3 A7 7 0 1 0 1192 842.8"/><path d="M1190 844.5 V854 M1185.3 849.3 H1194.7" stroke-width="1.8"/></g><path d="M1188 840.5 L1184 844.5 L1189.5 845 Z" fill="#707070"/>
<path d="M1201 846.5 H1205 L1203 849 Z" fill="#555"/>
<g transform="translate(1213,841)"><rect x="0.5" y="0.5" width="15" height="14" rx="1.5" fill="none" stroke="#d0d0d0" stroke-width="1"/><g fill="#ccc"><circle cx="4" cy="4" r="1"/><circle cx="12" cy="4" r="1"/><circle cx="4" cy="11" r="1"/><circle cx="12" cy="11" r="1"/><circle cx="8" cy="7.5" r="1.6"/></g></g>
<g transform="translate(1237,841)" fill="none" stroke="#707070"><rect x="0.7" y="0.7" width="14.6" height="13.8" rx="1.5" stroke-width="1.4"/><path d="M3.5 3.8 H11 M3.5 6.3 H9.5 M3.5 8.8 H8.5 M3.5 11.3 H7.5" stroke-width="1"/></g>
<g transform="translate(1261,841)"><rect x="0.7" y="0.7" width="14.6" height="13.8" rx="1.5" fill="none" stroke="#707070" stroke-width="1.4"/><rect x="1" y="1" width="14" height="3.5" fill="#707070"/><text x="8" y="13" text-anchor="middle" font-family="Liberation Sans" font-size="7" font-weight="bold" fill="#707070">24</text></g>
<g transform="translate(1286,841)"><rect x="0.7" y="0.7" width="14.6" height="13.8" rx="1.5" fill="none" stroke="#707070" stroke-width="1.4"/><rect x="3" y="3" width="6" height="6" rx="1" fill="#707070"/><circle cx="9.5" cy="9.5" r="3.3" fill="#f0f0f0" stroke="#707070" stroke-width="1.3"/></g>
<g transform="translate(1311,841)"><rect x="0.7" y="0.7" width="14.6" height="13.8" rx="1.5" fill="none" stroke="#707070" stroke-width="1.4"/><path d="M3 10 L9 4 H12.5 V7.5 L6.5 13.5 Z" fill="#707070"/><circle cx="10.5" cy="6" r="0.9" fill="#f0f0f0"/></g>
<g transform="translate(1337,841)" fill="none" stroke="#707070"><rect x="0.7" y="0.7" width="14.6" height="13.8" rx="1" stroke-width="1.4"/><path d="M1 4 H15 M4 1 V14.5" stroke-width="1"/><path d="M6 6.5 H12 M7 9 L12 13 M12 10 V13 H9" stroke-width="1.2"/></g>
<path d="M1408.5 848.5 H1416" stroke="#999" stroke-width="1"/>
<path d="M1428 848.5 H1512.5" stroke="#bbb" stroke-width="1"/>
<rect x="1479.3" y="840.3" width="4.4" height="14.5" fill="#f0f0f0" stroke="#999" stroke-width="0.8"/>
<path d="M1524 848.5 H1532 M1528 844.5 V852.5" stroke="#999" stroke-width="1"/>
<g transform="translate(1542,843)"><rect x="0.6" y="0.6" width="13" height="12" fill="none" stroke="#8a8a8a" stroke-width="1.2"/><path d="M0.6 2.2 H13.6" stroke="#8a8a8a" stroke-width="1"/><g fill="#999"><path d="M7 3.8 L8.5 5.5 H5.5 Z M7 11 L8.5 9.3 H5.5 Z M2.5 7.4 L4.2 5.9 V8.9 Z M11.6 7.4 L9.9 5.9 V8.9 Z"/></g></g>
<g transform="translate(1573,843)"><rect x="0" y="0" width="9" height="12.5" fill="#6e6e6e"/><path d="M9 0.5 H13 V12.5 H10 V3 A1 1 0 0 0 9 2 Z" fill="#f0f0f0" stroke="#6e6e6e" stroke-width="0.8"/></g>
<path d="M1591 847 H1595.5 L1593.25 849.5 Z" fill="#555"/>
</svg>
<div class="a" style="left:1355px;top:12px;line-height:13px;color:#fff;white-space:nowrap;letter-spacing:-0.2px">Guillaume Laill...</div>
</body></html>
